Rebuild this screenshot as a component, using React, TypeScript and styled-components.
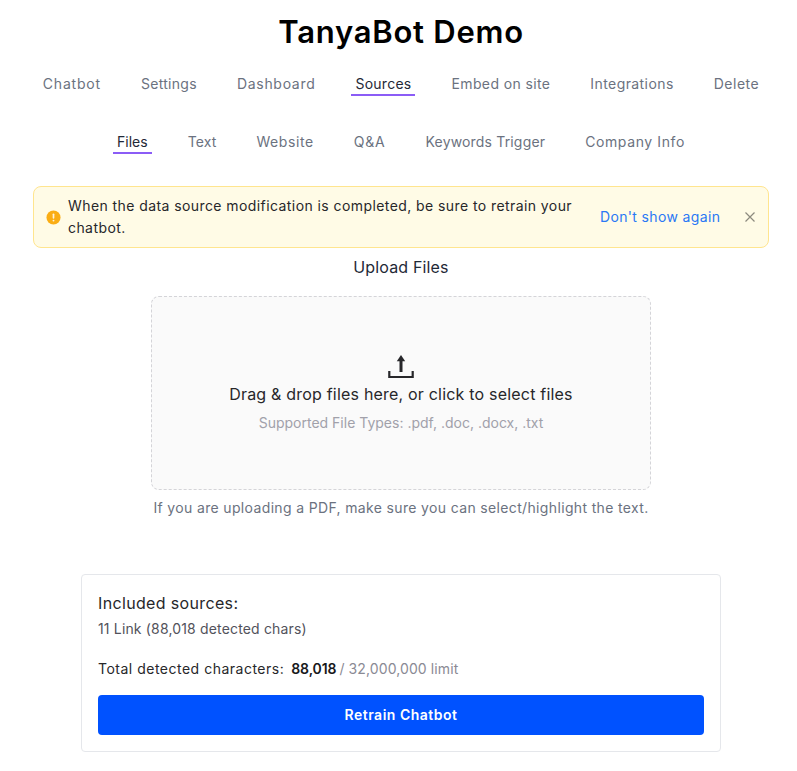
import React from "react";
import styled, { createGlobalStyle } from "styled-components";

const Global = createGlobalStyle`
  html, body { margin: 0; padding: 0; background: #fff; }
  body { font-family: Inter, "Liberation Sans", sans-serif; color: #18181b; }
`;

const Page = styled.div`
  box-sizing: border-box;
  width: 797px;
  height: 771px;
  padding-left: 5px;
  overflow: hidden;
  display: flex;
  flex-direction: column;
  align-items: center;
`;

const Title = styled.h1`
  margin: 10px 0 0;
  font-size: 31px;
  line-height: 44px;
  font-weight: 600;
  color: #000;
  letter-spacing: 0.75px;
`;

const TabRow = styled.nav<{ $gap: number; $top: number }>`
  display: flex;
  gap: ${(p) => p.$gap}px;
  margin-top: ${(p) => p.$top}px;
`;

const Tab = styled.a<{ $active?: boolean; $track: number }>`
  padding: 0 4px;
  font-size: 14px;
  line-height: 21px;
  letter-spacing: ${(p) => p.$track}px;
  color: ${(p) => (p.$active ? "#1f2937" : "#6b7280")};
  border-bottom: 2px solid ${(p) => (p.$active ? "#8b5cf6" : "transparent")};
  white-space: nowrap;
`;

const Alert = styled.div`
  box-sizing: border-box;
  width: 736px;
  height: 62px;
  margin-top: 32px;
  padding: 0 12px;
  display: flex;
  align-items: center;
  background: #fffbe6;
  border: 1px solid #ffe58f;
  border-radius: 8px;
`;

const AlertIcon = styled.svg`
  width: 15px;
  height: 15px;
  flex: none;
  margin-right: 7px;
`;

const AlertText = styled.div`
  width: 520px;
  font-size: 14px;
  line-height: 22px;
  color: #27272a;
  letter-spacing: 0.42px;
`;

const AlertLink = styled.a`
  margin-left: 12px;
  font-size: 14px;
  line-height: 22px;
  color: #2a78f5;
  white-space: nowrap;
  letter-spacing: 0.35px;
`;

const CloseIcon = styled.svg`
  width: 12px;
  height: 12px;
  margin-left: auto;
  margin-right: 0;
`;

const UploadTitle = styled.div`
  margin-top: 7px;
  font-size: 16px;
  line-height: 24px;
  color: #1f2937;
  letter-spacing: 0.15px;
`;

const Dropzone = styled.div`
  box-sizing: border-box;
  width: 500px;
  height: 194px;
  margin-top: 17px;
  padding-top: 57px;
  display: flex;
  flex-direction: column;
  align-items: center;
  background: #fafafa;
  border: 1px dashed #d4d4d8;
  border-radius: 8px;
`;

const UploadIcon = styled.svg`
  width: 26px;
  height: 26px;
  display: block;
`;

const DropText = styled.div`
  margin-top: 2px;
  font-size: 16px;
  line-height: 24px;
  color: #27272a;
  letter-spacing: 0.2px;
`;

const DropHint = styled.div`
  margin-top: 7px;
  font-size: 14px;
  line-height: 20px;
  color: #a1a1aa;
`;

const Note = styled.div`
  margin-top: 8px;
  font-size: 14px;
  line-height: 20px;
  color: #6b7280;
  letter-spacing: 0.35px;
`;

const Card = styled.section`
  box-sizing: border-box;
  width: 640px;
  height: 178px;
  margin-top: 56px;
  padding: 16px;
  background: #fff;
  border: 1px solid #e5e7eb;
  border-radius: 4px;
  display: flex;
  flex-direction: column;
`;

const CardHeading = styled.div`
  font-size: 16px;
  line-height: 24px;
  color: #27272a;
  letter-spacing: 0.35px;
`;

const CardLine = styled.div`
  margin-top: 4px;
  font-size: 14px;
  line-height: 20px;
  color: #52525b;
  letter-spacing: 0.16px;
`;

const Totals = styled.div`
  margin-top: 20px;
  font-size: 14px;
  line-height: 20px;
  color: #27272a;
  display: flex;
  gap: 7px;
  letter-spacing: 0.5px;
`;

const Count = styled.b`
  font-weight: 600;
  color: #18181b;
  letter-spacing: -0.1px;
`;

const Limit = styled.span`
  margin-left: -4px;
  color: #8a8a94;
  letter-spacing: 0.1px;
`;

const RetrainButton = styled.button`
  margin-top: 16px;
  height: 40px;
  border: 0;
  border-radius: 4px;
  background: #0052ff;
  color: #fff;
  font: 600 14px/20px Inter, "Liberation Sans", sans-serif;
  letter-spacing: 0.5px;
`;

const mainTabs: [string, number][] = [
  ["Chatbot", 0.8],
  ["Settings", 0.3],
  ["Dashboard", 0.7],
  ["Sources", 0.25],
  ["Embed on site", 0.38],
  ["Integrations", 0.42],
  ["Delete", 0.5],
];
const subTabs: [string, number][] = [
  ["Files", 0],
  ["Text", 0.1],
  ["Website", 0.6],
  ["Q&A", 0.8],
  ["Keywords Trigger", 0.17],
  ["Company Info", 0.6],
];

export default function App() {
  return (
    <Page>
      <Global />
      <Title>TanyaBot Demo</Title>
      <TabRow $gap={32} $top={19}>
        {mainTabs.map(([t, track]) => (
          <Tab key={t} $track={track} $active={t === "Sources"}>{t}</Tab>
        ))}
      </TabRow>
      <TabRow $gap={32} $top={35}>
        {subTabs.map(([t, track]) => (
          <Tab key={t} $track={track} $active={t === "Files"}>{t}</Tab>
        ))}
      </TabRow>
      <Alert>
        <AlertIcon viewBox="0 0 16 16">
          <circle cx="8" cy="8" r="7.5" fill="#faad14" />
          <rect x="7.1" y="3.6" width="1.8" height="5.6" rx="0.9" fill="#fff" opacity="0.85" />
          <circle cx="8" cy="11.3" r="1" fill="#fff" opacity="0.85" />
        </AlertIcon>
        <AlertText>When the data source modification is completed, be sure to retrain your chatbot.</AlertText>
        <AlertLink>Don't show again</AlertLink>
        <CloseIcon viewBox="0 0 12 12" fill="none" stroke="#8c8a7e" strokeWidth="1.2">
          <path d="M1.5 1.5l9 9M10.5 1.5l-9 9" />
        </CloseIcon>
      </Alert>
      <UploadTitle>Upload Files</UploadTitle>
      <Dropzone>
        <UploadIcon viewBox="0 0 26 26" fill="none" stroke="#27272a">
          <path d="M13 18V6" strokeWidth="3" />
          <path d="M13 1L8.8 7.2h8.4z" fill="#27272a" stroke="none" />
          <path d="M1.3 17v6h23.4v-6" strokeWidth="2.2" />
        </UploadIcon>
        <DropText>Drag &amp; drop files here, or click to select files</DropText>
        <DropHint>Supported File Types: .pdf, .doc, .docx, .txt</DropHint>
      </Dropzone>
      <Note>If you are uploading a PDF, make sure you can select/highlight the text.</Note>
      <Card>
        <CardHeading>Included sources:</CardHeading>
        <CardLine>11 Link (88,018 detected chars)</CardLine>
        <Totals>
          <span>Total detected characters:</span>
          <Count>88,018</Count>
          <Limit>/ 32,000,000 limit</Limit>
        </Totals>
        <RetrainButton>Retrain Chatbot</RetrainButton>
      </Card>
    </Page>
  );
}
